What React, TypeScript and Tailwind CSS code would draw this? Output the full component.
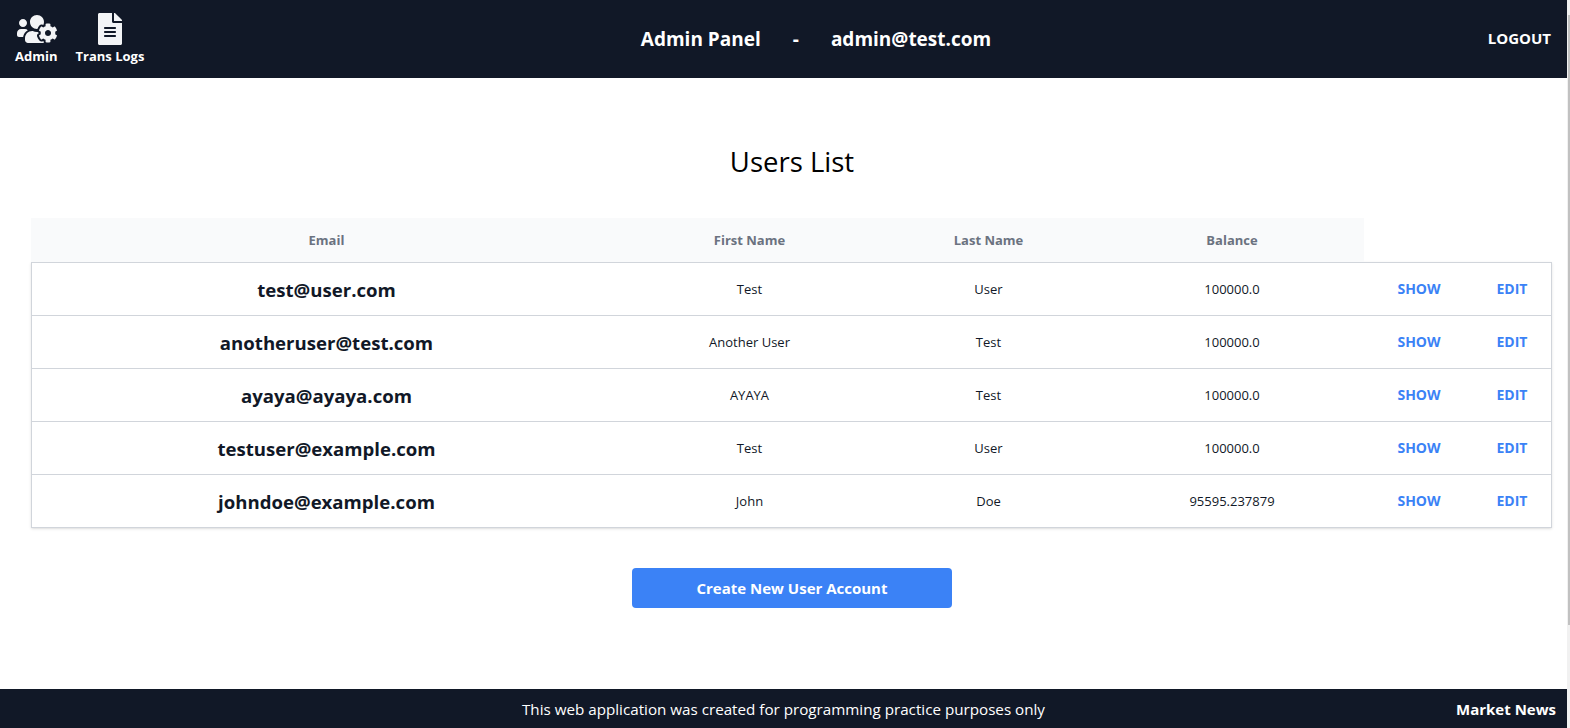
import { FaFileAlt, FaUsersCog } from "react-icons/fa";

const users = [
  { email: "test@user.com", first: "Test", last: "User", balance: "100000.0" },
  { email: "anotheruser@test.com", first: "Another User", last: "Test", balance: "100000.0" },
  { email: "ayaya@ayaya.com", first: "AYAYA", last: "Test", balance: "100000.0" },
  { email: "testuser@example.com", first: "Test", last: "User", balance: "100000.0" },
  { email: "johndoe@example.com", first: "John", last: "Doe", balance: "95595.237879" },
];

const cols = "grid grid-cols-[591px_255px_223px_264px_110px_76px]";

function Header() {
  return (
    <header className="flex h-[78px] items-center justify-between bg-[#111827] pl-[15px] pr-[16px] text-white">
      <div className="flex w-[250px] gap-[18px]">
        <a className="flex flex-col items-center text-[13px] font-bold leading-[18px]">
          <FaUsersCog className="mb-[2px] ml-[2px] h-[32px] w-[40px] text-[#f3f4f6]" />
          Admin
        </a>
        <a className="flex flex-col items-center text-[13px] font-bold leading-[18px]">
          <FaFileAlt className="mb-[2px] h-[32px] w-[24px] text-[#f3f4f6]" />
          Trans Logs
        </a>
      </div>
      <div className="flex items-center text-[19px] font-bold">
        <span>Admin Panel</span>
        <span className="mx-[32px]">-</span>
        <span>admin@test.com</span>
      </div>
      <a className="w-[184px] pb-[2px] text-right text-[15px] font-bold">LOGOUT</a>
    </header>
  );
}

function UsersTable() {
  return (
    <div className="ml-[31px] mr-[15px]">
      <div className={`${cols} h-[44px] items-center text-center text-[13px] font-bold text-[#6b7280]`}>
        <div className="flex h-full items-center justify-center bg-[#f9fafb] pt-[2px]">Email</div>
        <div className="flex h-full items-center justify-center bg-[#f9fafb] pt-[2px]">First Name</div>
        <div className="flex h-full items-center justify-center bg-[#f9fafb] pt-[2px]">Last Name</div>
        <div className="flex h-full items-center justify-center bg-[#f9fafb] pt-[2px]">Balance</div>
      </div>
      <div className="border border-[#d1d5db] shadow-sm">
        {users.map((u, i) => (
          <div
            key={u.email}
            className={`${cols} -ml-px items-center text-center text-[13px] text-[#111827] ${i > 0 ? "h-[53px] border-t border-[#d1d5db]" : "h-[52px]"}`}
          >
            <div className="pt-[2px] text-[18.6px] font-bold">{u.email}</div>
            <div className="pt-[2px]">{u.first}</div>
            <div className="pt-[2px]">{u.last}</div>
            <div className="pt-[2px]">{u.balance}</div>
            <a className="pb-[2px] text-[14px] font-bold text-[#3b82f6]">SHOW</a>
            <a className="pb-[2px] text-[14px] font-bold text-[#3b82f6]">EDIT</a>
          </div>
        ))}
      </div>
    </div>
  );
}

export default function App() {
  return (
    <div className="flex h-[728px] overflow-hidden bg-white font-['Open_Sans','Noto_Sans',sans-serif]">
      <div className="flex min-w-0 flex-1 flex-col">
        <Header />
        <main className="flex-1">
          <h1 className="mt-[63px] mb-[35px] pl-[17px] text-center text-[27.5px] leading-[42px] text-black">Users List</h1>
          <UsersTable />
          <div className="mt-[40px] flex justify-center pl-[17px]">
            <button
              type="button"
              className="h-[40px] w-[320px] rounded-[4px] bg-[#3b82f6] text-[15px] font-bold text-white"
            >
              Create New User Account
            </button>
          </div>
        </main>
        <footer className="relative flex h-[39px] items-center justify-center bg-[#111827] pt-[2px] text-[15.2px] text-white">
          <span>This web application was created for programming practice purposes only</span>
          <a className="absolute right-[11px] text-[15px] font-bold">Market News</a>
        </footer>
      </div>
      <div className="w-[3px] bg-[#f1f1f1] pt-[15px]">
        <div className="ml-auto h-[610px] w-[2px] bg-[#c1c1c1]" />
      </div>
    </div>
  );
}
